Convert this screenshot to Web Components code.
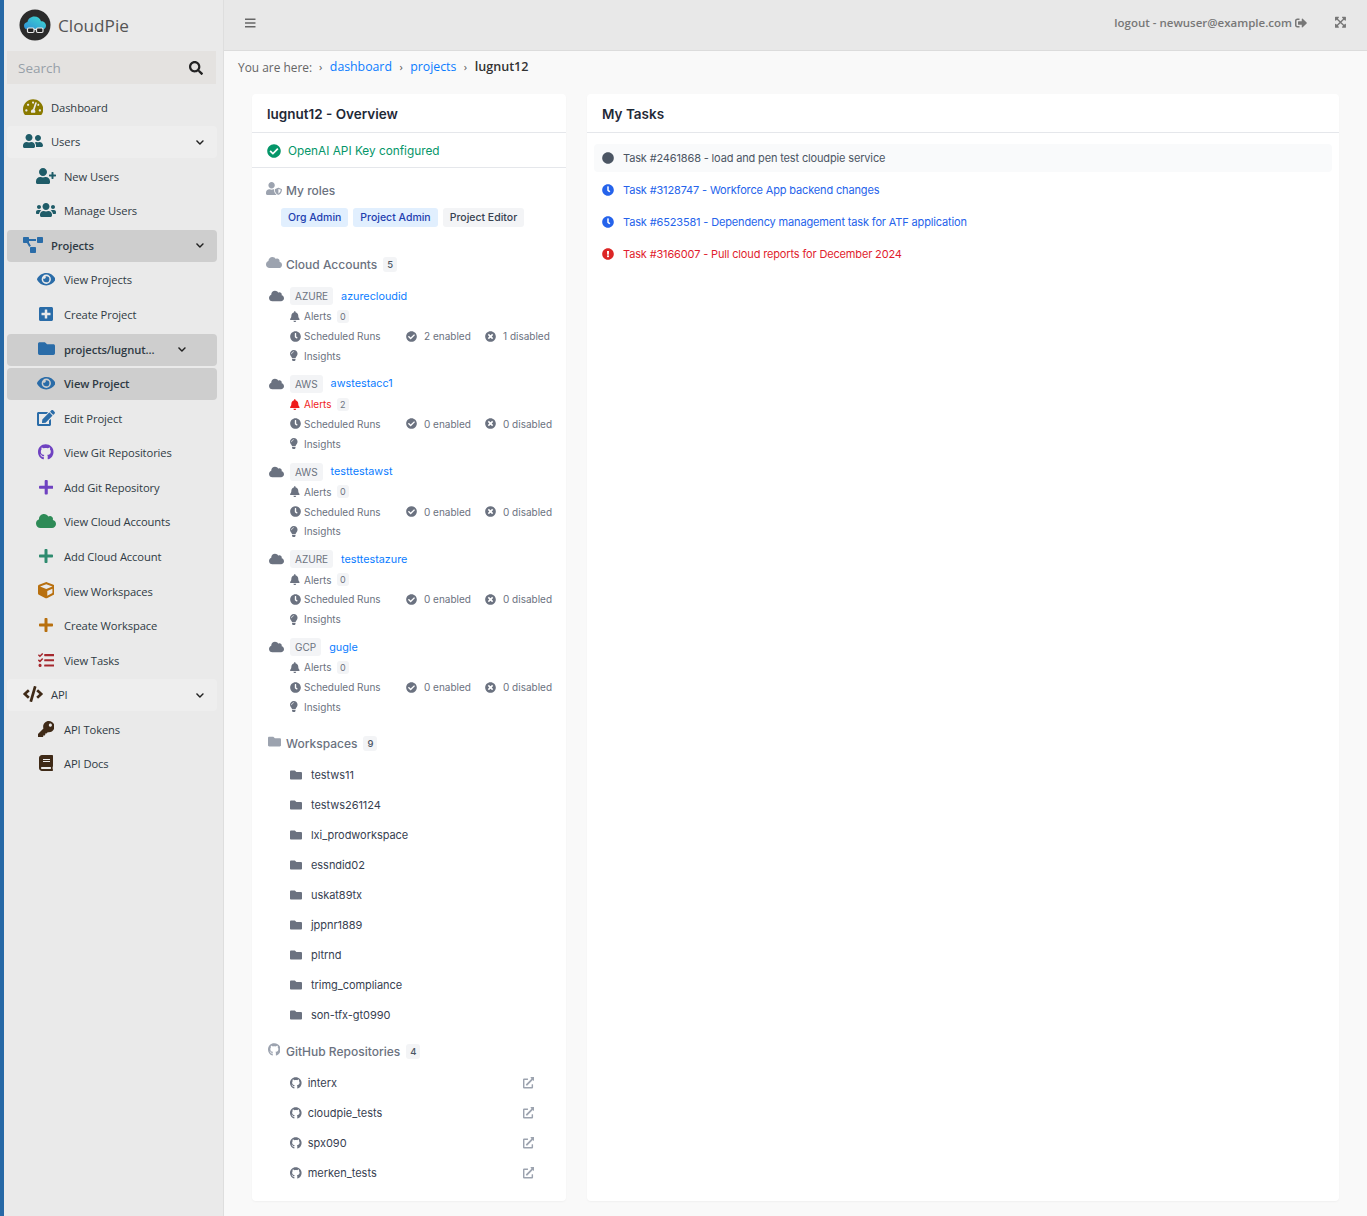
<!DOCTYPE html>
<html lang="en"><head><meta charset="utf-8"><title>CloudPie</title>
<style>html,body{margin:0;padding:0;background:#f9f9f9}body{font-family:"Open Sans",sans-serif}</style>
</head><body>
<app-shell></app-shell>
<script>
const I={
search:[512,"M505 442.7L405.3 343c-4.5-4.5-10.6-7-17-7H372c27.6-35.3 44-79.7 44-128C416 93.1 322.9 0 208 0S0 93.1 0 208s93.1 208 208 208c48.3 0 92.7-16.4 128-44v16.3c0 6.4 2.5 12.5 7 17l99.7 99.7c9.4 9.4 24.6 9.4 33.9 0l28.3-28.3c9.4-9.4 9.4-24.6.1-34zM208 336c-70.7 0-128-57.2-128-128 0-70.7 57.2-128 128-128 70.7 0 128 57.2 128 128 0 70.7-57.2 128-128 128z"],
check:[512,"M504 256c0 136.967-111.033 248-248 248S8 392.967 8 256 119.033 8 256 8s248 111.033 248 248zM227.314 387.314l184-184c6.248-6.248 6.248-16.379 0-22.627l-22.627-22.627c-6.248-6.249-16.379-6.249-22.628 0L216 308.118l-70.059-70.059c-6.248-6.248-16.379-6.248-22.628 0l-22.627 22.627c-6.248 6.248-6.248 16.379 0 22.627l104 104c6.249 6.249 16.379 6.249 22.628.001z"],
times:[512,"M256 8C119 8 8 119 8 256s111 248 248 248 248-111 248-248S393 8 256 8zm121.6 313.1c4.7 4.7 4.7 12.3 0 17L338 377.6c-4.7 4.7-12.3 4.7-17 0L256 312l-65.1 65.6c-4.7 4.7-12.3 4.7-17 0L134.4 338c-4.7-4.7-4.7-12.3 0-17l65.6-65-65.6-65.1c-4.7-4.7-4.7-12.3 0-17l39.6-39.6c4.7-4.7 12.3-4.7 17 0l65 65.7 65.1-65.6c4.7-4.7 12.3-4.7 17 0l39.6 39.6c4.7 4.7 4.7 12.3 0 17L312 256l65.6 65.1z"],
clock:[512,"M256,8C119,8,8,119,8,256S119,504,256,504,504,393,504,256,393,8,256,8Zm92.49,313h0l-20,25a16,16,0,0,1-22.49,2.5h0l-67-49.72a40,40,0,0,1-15-31.23V112a16,16,0,0,1,16-16h32a16,16,0,0,1,16,16V256l58,42.5A16,16,0,0,1,348.49,321Z"],
dot:[512,"M256 8C119 8 8 119 8 256s111 248 248 248 248-111 248-248S393 8 256 8z"],
exc:[512,"M504 256c0 136.997-111.043 248-248 248S8 392.997 8 256C8 119.083 119.043 8 256 8s248 111.083 248 248zm-248 50c-25.405 0-46 20.595-46 46s20.595 46 46 46 46-20.595 46-46-20.595-46-46-46zm-43.673-165.346l7.418 136c.347 6.364 5.609 11.346 11.982 11.346h48.546c6.373 0 11.635-4.982 11.982-11.346l7.418-136c.375-6.874-5.098-12.654-11.982-12.654h-63.383c-6.884 0-12.356 5.78-11.981 12.654z"],
bell:[448,"M224 512c35.32 0 63.97-28.65 63.97-64H160.03c0 35.35 28.65 64 63.97 64zm215.39-149.71c-19.32-20.76-55.47-51.99-55.47-154.29 0-77.7-54.48-139.9-127.94-155.16V32c0-17.67-14.32-32-31.98-32s-31.98 14.33-31.98 32v20.84C118.56 68.1 64.08 130.3 64.08 208c0 102.3-36.15 133.53-55.47 154.29-6 6.45-8.66 14.16-8.61 21.71.11 16.4 12.98 32 32.1 32h383.8c19.12 0 32-15.6 32.1-32 .05-7.55-2.61-15.27-8.61-21.71z"],
cloud:[640,"M537.6 226.6c4.1-10.7 6.4-22.4 6.4-34.6 0-53-43-96-96-96-19.7 0-38.1 6-53.3 16.2C367 64.2 315.3 32 256 32c-88.4 0-160 71.6-160 160 0 2.7.1 5.4.2 8.1C40.2 219.8 0 273.2 0 336c0 79.5 64.5 144 144 144h368c70.7 0 128-57.3 128-128 0-61.9-44-113.6-102.4-125.4z"],
folder:[512,"M464 128H272l-64-64H48C21.49 64 0 85.49 0 112v288c0 26.51 21.49 48 48 48h416c26.51 0 48-21.49 48-48V176c0-26.51-21.49-48-48-48z"],
plus:[448,"M416 208H272V64c0-17.67-14.33-32-32-32h-32c-17.67 0-32 14.33-32 32v144H32c-17.67 0-32 14.33-32 32v32c0 17.67 14.33 32 32 32h144v144c0 17.67 14.33 32 32 32h32c17.67 0 32-14.33 32-32V304h144c17.67 0 32-14.33 32-32v-32c0-17.67-14.33-32-32-32z"],
plussq:[448,"M400 32H48C21.5 32 0 53.5 0 80v352c0 26.5 21.5 48 48 48h352c26.5 0 48-21.5 48-48V80c0-26.5-21.5-48-48-48zm-32 252c0 6.6-5.4 12-12 12h-92v92c0 6.6-5.4 12-12 12h-56c-6.6 0-12-5.4-12-12v-92H92c-6.6 0-12-5.4-12-12v-56c0-6.6 5.4-12 12-12h92v-92c0-6.6 5.4-12 12-12h56c6.6 0 12 5.4 12 12v92h92c6.6 0 12 5.4 12 12v56z"],
eye:[576,"M572.52 241.4C518.29 135.59 410.93 64 288 64S57.68 135.64 3.48 241.41a32.35 32.35 0 0 0 0 29.19C57.71 376.41 165.07 448 288 448s230.32-71.64 284.52-177.41a32.35 32.35 0 0 0 0-29.19zM288 400a144 144 0 1 1 144-144 143.93 143.93 0 0 1-144 144zm0-240a95.31 95.31 0 0 0-25.31 3.79 47.85 47.85 0 0 1-66.9 66.9A95.78 95.78 0 1 0 288 160z"],
users:[640,"M96 224c35.3 0 64-28.7 64-64s-28.7-64-64-64-64 28.7-64 64 28.7 64 64 64zm448 0c35.3 0 64-28.7 64-64s-28.7-64-64-64-64 28.7-64 64 28.7 64 64 64zm32 32h-64c-17.6 0-33.5 7.1-45.1 18.6 40.3 22.1 68.9 62 75.1 109.4h66c17.7 0 32-14.3 32-32v-32c0-35.3-28.7-64-64-64zm-256 0c61.9 0 112-50.1 112-112S381.9 32 320 32 208 82.1 208 144s50.1 112 112 112zm76.8 32h-8.3c-20.8 10-43.9 16-68.5 16s-47.6-6-68.5-16h-8.3C179.6 288 128 339.6 128 403.2V432c0 26.5 21.5 48 48 48h288c26.5 0 48-21.5 48-48v-28.8c0-63.6-51.6-115.2-115.2-115.2zm-223.7-13.4C161.5 263.1 145.6 256 128 256H64c-35.3 0-64 28.7-64 64v32c0 17.7 14.3 32 32 32h65.9c6.3-47.4 34.9-87.3 75.2-109.4z"],
friends:[640,"M192 256c61.9 0 112-50.1 112-112S253.9 32 192 32 80 82.1 80 144s50.1 112 112 112zm76.8 32h-8.3c-20.8 10-43.9 16-68.5 16s-47.6-6-68.5-16h-8.3C51.6 288 0 339.6 0 403.2V432c0 26.5 21.5 48 48 48h288c26.5 0 48-21.5 48-48v-28.8c0-63.6-51.6-115.2-115.2-115.2zM480 256c53 0 96-43 96-96s-43-96-96-96-96 43-96 96 43 96 96 96zm48 32h-3.8c-13.9 4.8-28.6 8-44.2 8s-30.3-3.2-44.2-8H432c-20.4 0-39.2 5.9-55.7 15.4 24.4 26.3 39.7 61.2 39.7 99.8v38.4c0 2.2-.5 4.3-.6 6.4H592c26.5 0 48-21.5 48-48 0-61.9-50.1-112-112-112z"],
userplus:[640,"M624 208h-64v-64c0-8.8-7.2-16-16-16h-32c-8.8 0-16 7.2-16 16v64h-64c-8.8 0-16 7.2-16 16v32c0 8.8 7.2 16 16 16h64v64c0 8.8 7.2 16 16 16h32c8.8 0 16-7.2 16-16v-64h64c8.8 0 16-7.2 16-16v-32c0-8.8-7.2-16-16-16zm-400 48c70.7 0 128-57.3 128-128S294.7 0 224 0 96 57.3 96 128s57.3 128 128 128zm89.6 32h-16.7c-22.2 10.2-46.9 16-72.9 16s-50.6-5.8-72.9-16h-16.7C60.2 288 0 348.2 0 422.4V464c0 26.5 21.5 48 48 48h352c26.5 0 48-21.5 48-48v-41.6c0-74.2-60.2-134.4-134.4-134.4z"],
edit:[576,"M402.6 83.2l90.2 90.2c3.8 3.8 3.8 10 0 13.8L274.4 405.6l-92.8 10.3c-12.4 1.4-22.9-9.1-21.5-21.5l10.3-92.8L388.8 83.2c3.8-3.8 10-3.8 13.8 0zm162-22.9l-48.8-48.8c-15.2-15.2-39.9-15.2-55.2 0l-35.4 35.4c-3.8 3.8-3.8 10 0 13.8l90.2 90.2c3.8 3.8 10 3.8 13.8 0l35.4-35.4c15.2-15.3 15.2-40 0-55.2zM384 346.2V448H64V128h229.8c3.2 0 6.2-1.3 8.5-3.5l40-40c7.6-7.6 2.2-20.5-8.5-20.5H48C21.5 64 0 85.5 0 112v352c0 26.5 21.5 48 48 48h352c26.5 0 48-21.5 48-48V306.2c0-10.7-12.9-16-20.5-8.5l-40 40c-2.2 2.3-3.5 5.3-3.5 8.5z"],
github:[496,"M165.9 397.4c0 2-2.3 3.6-5.2 3.6-3.3 0-5.6-1.6-5.6-3.6 0-2 2.3-3.6 5.2-3.6 3-.3 5.6 1.3 5.6 3.6zm-31.1-4.5c-.7 2 1.3 4.3 4.3 4.9 2.6 1 5.6 0 6.2-2s-1.3-4.3-4.3-5.2c-2.6-.7-5.5.3-6.2 2.3zm44.2-1.7c-2.9.7-4.9 2.6-4.6 4.9.3 2 2.9 3.3 5.9 2.6 2.9-.7 4.9-2.6 4.6-4.6-.3-1.9-3-3.2-5.9-2.9zM244.8 8C106.1 8 0 113.3 0 252c0 110.9 69.8 205.8 169.5 239.2 12.8 2.3 17.3-5.6 17.3-12.1 0-6.2-.3-40.4-.3-61.4 0 0-70 15-84.7-29.8 0 0-11.4-29.1-27.8-36.6 0 0-22.9-15.7 1.6-15.4 0 0 24.9 2 38.6 25.8 21.9 38.6 58.6 27.5 72.9 20.9 2.3-16 8.8-27.1 16-33.7-55.9-6.2-112.3-14.3-112.3-110.5 0-27.5 7.6-41.3 23.6-58.9-2.6-6.5-11.1-33.3 2.6-67.9 20.9-6.5 69 27 69 27 20-5.6 41.5-8.5 62.8-8.5s42.8 2.9 62.8 8.5c0 0 48.1-33.6 69-27 13.7 34.7 5.2 61.4 2.6 67.9 16 17.7 25.8 31.5 25.8 58.9 0 96.5-58.9 104.2-114.8 110.5 9.2 7.9 17 22.9 17 46.4 0 33.7-.3 75.4-.3 83.6 0 6.5 4.6 14.4 17.3 12.1C428.2 457.8 496 362.9 496 252 496 113.3 383.5 8 244.8 8z"],
ext:[512,"M432,320H400a16,16,0,0,0-16,16V448H64V128H208a16,16,0,0,0,16-16V80a16,16,0,0,0-16-16H48A48,48,0,0,0,0,112V464a48,48,0,0,0,48,48H400a48,48,0,0,0,48-48V336A16,16,0,0,0,432,320ZM488,0h-128c-21.37,0-32.05,25.91-17,41l35.73,35.73L135,320.37a24,24,0,0,0,0,34L157.67,377a24,24,0,0,0,34,0L435.28,133.32,471,169c15,15,41,4.5,41-17V24A24,24,0,0,0,488,0Z"],
cube:[512,"M239.1 6.3l-208 78c-18.7 7-31.1 25-31.1 45v225.1c0 18.2 10.3 34.8 26.5 42.9l208 104c13.5 6.8 29.4 6.8 42.9 0l208-104c16.3-8.1 26.5-24.8 26.5-42.9V129.3c0-20-12.4-37.9-31.1-44.9l-208-78C262 2.2 250 2.2 239.1 6.3zM256 68.4l192 72v1.1l-192 78-192-78v-1.1l192-72zm32 356V275.5l160-65v133.9l-160 80z"],
tasks:[512,"M139.61 35.5a12 12 0 0 0-17 0L58.93 98.81l-22.7-22.12a12 12 0 0 0-17 0L3.53 92.41a12 12 0 0 0 0 17l47.59 47.4a12.78 12.78 0 0 0 17.61 0l15.59-15.62L156.52 69a12.09 12.09 0 0 0 .09-17zm0 159.19a12 12 0 0 0-17 0l-63.68 63.72-22.7-22.1a12 12 0 0 0-17 0L3.53 252a12 12 0 0 0 0 17L51 316.5a12.77 12.77 0 0 0 17.6 0l15.7-15.69 72.2-72.22a12 12 0 0 0 .09-16.9zM64 368c-26.49 0-48.59 21.5-48.59 48S37.53 464 64 464a48 48 0 0 0 0-96zm432 16H208a16 16 0 0 0-16 16v32a16 16 0 0 0 16 16h288a16 16 0 0 0 16-16v-32a16 16 0 0 0-16-16zm0-320H208a16 16 0 0 0-16 16v32a16 16 0 0 0 16 16h288a16 16 0 0 0 16-16V80a16 16 0 0 0-16-16zm0 160H208a16 16 0 0 0-16 16v32a16 16 0 0 0 16 16h288a16 16 0 0 0 16-16v-32a16 16 0 0 0-16-16z"],
code:[640,"M278.9 511.5l-61-17.7c-6.4-1.8-10-8.5-8.2-14.9L346.2 8.7c1.8-6.4 8.5-10 14.9-8.2l61 17.7c6.4 1.8 10 8.5 8.2 14.9L293.8 503.3c-1.9 6.4-8.5 10.1-14.9 8.2zm-114-112.2l43.5-46.4c4.6-4.9 4.3-12.7-.8-17.2L117 256l90.6-79.7c5.1-4.5 5.5-12.3.8-17.2l-43.5-46.4c-4.5-4.8-12.1-5.1-17-.5L3.8 247.2c-5.1 4.7-5.1 12.8 0 17.5l144.1 135.1c4.9 4.6 12.5 4.4 17-.5zm327.2.6l144.1-135.1c5.1-4.7 5.1-12.8 0-17.5L492.1 112.1c-4.8-4.5-12.4-4.3-17 .5L431.6 159c-4.6 4.9-4.3 12.7.8 17.2L523 256l-90.6 79.7c-5.1 4.5-5.5 12.3-.8 17.2l43.5 46.4c4.5 4.9 12.1 5.1 17 .6z"],
key:[512,"M512 176.001C512 273.203 433.202 352 336 352c-11.22 0-22.19-1.062-32.827-3.069l-24.012 27.014A23.999 23.999 0 0 1 261.223 384H224v40c0 13.255-10.745 24-24 24h-40v40c0 13.255-10.745 24-24 24H24c-13.255 0-24-10.745-24-24v-78.059c0-6.365 2.529-12.47 7.029-16.971l161.802-161.802C163.108 213.814 160 195.271 160 176 160 78.798 238.797.001 335.999 0 433.488-.001 512 78.511 512 176.001zM336 128c0 26.51 21.49 48 48 48s48-21.49 48-48-21.49-48-48-48-48 21.49-48 48z"],
book:[448,"M448 360V24c0-13.3-10.7-24-24-24H96C43 0 0 43 0 96v320c0 53 43 96 96 96h328c13.3 0 24-10.7 24-24v-16c0-7.5-3.5-14.3-8.9-18.7-4.2-15.4-4.2-59.3 0-74.7 5.4-4.3 8.9-11.1 8.9-18.6zM128 134c0-3.3 2.7-6 6-6h212c3.3 0 6 2.7 6 6v20c0 3.3-2.7 6-6 6H134c-3.3 0-6-2.7-6-6v-20zm0 64c0-3.3 2.7-6 6-6h212c3.3 0 6 2.7 6 6v20c0 3.3-2.7 6-6 6H134c-3.3 0-6-2.7-6-6v-20zm253.4 250H96c-17.7 0-32-14.3-32-32 0-17.6 14.4-32 32-32h285.4c-1.9 17.1-1.9 46.9 0 64z"],
bulb:[352,"M96.06 454.35c.01 6.29 1.87 12.45 5.36 17.69l17.09 25.69a31.99 31.99 0 0 0 26.64 14.28h61.71a31.99 31.99 0 0 0 26.64-14.28l17.09-25.69a31.989 31.989 0 0 0 5.36-17.69l.04-38.35H96.01l.05 38.35zM0 176c0 44.37 16.45 84.85 43.56 115.78 16.52 18.85 42.36 58.23 52.21 91.45.04.26.07.52.11.78h160.24c.04-.26.07-.51.11-.78 9.85-33.22 35.69-72.6 52.21-91.45C335.55 260.85 352 220.37 352 176 352 78.61 272.91-.3 175.45 0 73.44.31 0 82.97 0 176zm176-80c-44.11 0-80 35.89-80 80 0 8.84-7.16 16-16 16s-16-7.16-16-16c0-61.76 50.24-112 112-112 8.84 0 16 7.16 16 16s-7.16 16-16 16z"],
gauge:[576,"M288 32C128.94 32 0 160.94 0 320c0 52.8 14.25 102.26 39.06 144.8 5.61 9.62 16.3 15.2 27.44 15.2h443c11.14 0 21.83-5.58 27.44-15.2C561.75 422.26 576 372.8 576 320c0-159.06-128.94-288-288-288zm0 64c14.71 0 26.58 10.13 30.32 23.65-1.11 2.26-2.64 4.23-3.45 6.67l-9.22 27.67c-5.13 3.49-10.97 6.01-17.64 6.01-17.67 0-32-14.33-32-32S270.33 96 288 96zM96 384c-17.67 0-32-14.33-32-32s14.33-32 32-32 32 14.33 32 32-14.33 32-32 32zm48-160c-17.67 0-32-14.33-32-32s14.33-32 32-32 32 14.33 32 32-14.33 32-32 32zm246.77-72.41l-61.33 184C343.13 347.33 352 364.54 352 384c0 11.72-3.38 22.55-8.88 32H232.88c-5.5-9.45-8.88-20.28-8.88-32 0-33.94 26.5-61.43 59.9-63.59l61.34-184.01c4.17-12.56 17.73-19.45 30.36-15.17 12.57 4.19 19.35 17.79 15.17 30.36zm14.66 57.2l15.52-46.55c3.47-1.29 7.13-2.23 11.05-2.23 17.67 0 32 14.33 32 32s-14.33 32-32 32c-11.38-.01-20.89-6.28-26.57-15.22zM480 384c-17.67 0-32-14.33-32-32s14.33-32 32-32 32 14.33 32 32-14.33 32-32 32z"],
diagram:[640,"M384 320H256c-17.67 0-32 14.33-32 32v128c0 17.67 14.33 32 32 32h128c17.67 0 32-14.33 32-32V352c0-17.67-14.33-32-32-32zM192 32c0-17.67-14.33-32-32-32H32C14.33 0 0 14.33 0 32v128c0 17.67 14.33 32 32 32h95.72l73.16 128.04C211.98 300.98 232.4 288 256 288h.28L192 175.51V128h224V64H192V32zM608 0H480c-17.67 0-32 14.33-32 32v128c0 17.67 14.33 32 32 32h128c17.67 0 32-14.33 32-32V32c0-17.67-14.33-32-32-32z"],
signout:[512,"M497 273L329 441c-15 15-41 4.5-41-17v-96H152c-13.3 0-24-10.7-24-24v-96c0-13.3 10.7-24 24-24h136V88c0-21.4 25.9-32 41-17l168 168c9.3 9.4 9.3 24.6 0 34zM192 436v-40c0-6.6-5.4-12-12-12H96c-17.7 0-32-14.3-32-32V160c0-17.7 14.3-32 32-32h84c6.6 0 12-5.4 12-12V76c0-6.6-5.4-12-12-12H96c-53 0-96 43-96 96v192c0 53 43 96 96 96h84c6.6 0 12-5.4 12-12z"],
expand:[448,"M448.1 344v112c0 13.3-10.7 24-24 24h-112c-21.4 0-32.1-25.9-17-41l36.2-36.2L224 295.6 116.8 402.9 153 439c15.1 15.1 4.4 41-17 41H24c-13.3 0-24-10.7-24-24V344c0-21.4 25.9-32.1 41-17l36.2 36.2L184.5 256 77.2 148.7 41 185c-15.1 15.1-41 4.4-41-17V56c0-13.3 10.7-24 24-24h112c21.4 0 32.1 25.9 17 41l-36.2 36.2L224 216.4l107.3-107.3L295.1 73c-15.1-15.1-4.4-41 17-41h112c13.3 0 24 10.7 24 24v112c0 21.4-25.9 32.1-41 17l-36.2-36.2L263.6 256l107.3 107.3 36.2-36.2c15.1-15.2 41-4.5 41 16.9z"],
shield:[640,"M622.3 271.1l-115.2-45c-4.1-1.6-12.6-3.7-22.2 0l-115.2 45c-10.7 4.2-17.7 14-17.7 24.9 0 111.6 68.7 188.8 132.9 213.9 9.6 3.7 18 1.6 22.2 0C558.4 489.9 640 420.5 640 296c0-10.9-7-20.7-17.7-24.9zM496 462.4V273.3l95.5 37.3c-5.6 87.1-60.9 135.4-95.5 151.8zM224 256c70.7 0 128-57.3 128-128S294.7 0 224 0 96 57.3 96 128s57.3 128 128 128zm96 40c0-2.5.8-4.7 1.1-7.2-2.5-.1-4.9-.8-7.5-.8h-16.7c-22.2 10.2-46.9 16-72.9 16s-50.6-5.8-72.9-16h-16.7C60.2 288 0 348.2 0 422.4V464c0 26.5 21.5 48 48 48h352c6.8 0 13.3-1.5 19.2-4-54-42.9-99.2-116.7-99.2-212z"],
chevron:[448,"M207 381.5L12.7 187.1c-9.4-9.4-9.4-24.6 0-33.9l22.7-22.7c9.4-9.4 24.5-9.4 33.9 0L224 284.5l154.7-154c9.4-9.3 24.5-9.3 33.9 0l22.7 22.7c9.4 9.4 9.4 24.6 0 33.9L241 381.5c-9.4 9.4-24.6 9.4-34 0z"],
bars:[448,"M16 132h416c8.8 0 16-7.2 16-16V76c0-8.8-7.2-16-16-16H16C7.2 60 0 67.2 0 76v40c0 8.800 7.2 16 16 16zm0 160h416c8.800 0 16-7.2 16-16v-40c0-8.800-7.200-16-16-16H16c-8.800 0-16 7.200-16 16v40c0 8.800 7.200 16 16 16zm0 160h416c8.800 0 16-7.200 16-16v-40c0-8.800-7.200-16-16-16H16c-8.800 0-16 7.200-16 16v40c0 8.800 7.200 16 16 16z"]
};
const def=(n,c)=>customElements.define(n,c);
class Base extends HTMLElement{
  constructor(){super();this.attachShadow({mode:"open"});}
  connectedCallback(){this.shadowRoot.innerHTML=this.html();}
}
def("fa-icon",class extends Base{
  html(){const [w,d]=I[this.getAttribute("n")];
    const s=+this.getAttribute("s")||14;const c=this.getAttribute("c")||"currentColor";
    const wd=s*w/512;
    return `<style>:host{display:inline-flex;align-items:center;justify-content:center;flex:none;line-height:0}svg{display:block}</style><svg width="${wd}" height="${s}" viewBox="0 0 ${w} 512" fill="${c}" aria-hidden="true"><path d="${d}"/></svg>`;}
});
def("brand-logo",class extends Base{
  html(){return `<style>:host{display:flex;align-items:center;height:50px;padding-left:19px;gap:7px;color:#555;font:400 17.200px "Open Sans",sans-serif}svg{display:block;flex:none}</style>
  <svg width="32" height="32" viewBox="0 0 32 32"><defs><linearGradient id="g" x1="0" y1="1" x2="1" y2="0"><stop offset="0" stop-color="#2f8fd8"/><stop offset="1" stop-color="#3fdcd0"/></linearGradient></defs>
  <circle cx="16" cy="16" r="15.500" fill="#2b2b2b"/>
  <path d="M9 20.500c-2.500 0-4-1.800-4-3.800 0-2 1.500-3.500 3.500-3.700.500-3.200 3.500-5.500 6.800-5.500 3.300 0 5.800 1.900 6.700 4.700 2.900-.1 5 2 5 4.500 0 2.200-1.600 3.800-3.800 3.800z" fill="url(#g)"/>
  <rect x="8.500" y="19" width="6.500" height="4.500" rx="1.200" fill="#222" stroke="#e8e8e8" stroke-width="1.200"/>
  <rect x="17.500" y="19" width="6.500" height="4.500" rx="1.200" fill="#222" stroke="#e8e8e8" stroke-width="1.200"/>
  <path d="M15 20.500h2.500" stroke="#e8e8e8" stroke-width="1.200"/></svg><slot></slot>`;}
});
def("search-box",class extends Base{
  html(){return `<style>:host{display:flex;align-items:center;justify-content:space-between;box-sizing:border-box;height:33px;margin:1px 7px 0;padding:0 13px 0 11px;background:#e4e2e0;color:#97a0a8;font:400 13.500px "Open Sans",sans-serif}fa-icon{color:#222}</style><span>Search</span><fa-icon n="search" s="14"></fa-icon>`;}
});
def("nav-row",class extends Base{
  html(){const a=k=>this.getAttribute(k);
    const sub=this.hasAttribute("sub"),chev=this.hasAttribute("chev");
    const bg=a("bg")||"transparent";
    return `<style>:host{display:flex;align-items:center;box-sizing:border-box;height:32px;width:210px;padding-left:${sub?29:16}px;background:${bg};border-radius:4px;color:${a("tc")||"#2f3a44"};font:${a("fw")||400} 11.200px/32px "Open Sans",sans-serif;letter-spacing:-.1px}
    .i{width:20px;display:flex;justify-content:center;flex:none;margin-right:8px;position:relative;top:-1px}
    .t{flex:1;white-space:nowrap}
    .c{margin-right:${a("cr")||13}px;color:#222;display:flex}</style>
    <span class="i"><fa-icon n="${a("i")}" s="${a("s")||16}" c="${a("ic")}"></fa-icon></span><span class="t"><slot></slot></span>${chev?`<span class="c"><fa-icon n="chevron" s="9"></fa-icon></span>`:""}`;}
});
def("side-bar",class extends Base{
  html(){
    const G=(i,ic,t,extra="")=>`<nav-row i="${i}" ic="${ic}" ${extra}>${t}</nav-row>`;
    const teal="#1f5c68",blue="#2a6ca8",pur="#6f42c1",brn="#3f2a17",org="#b8700f";
    return `<style>:host{display:block;box-sizing:border-box;width:224px;min-height:1216px;background:#eaeaea;border-left:4px solid #2769a6;border-right:1px solid #dedede}
    .n{display:flex;flex-direction:column;gap:2.580px;margin:7.500px 0 0 3px}</style>
    <brand-logo style="margin-left:-4px">CloudPie</brand-logo>
    <search-box style="margin-left:3px"></search-box>
    <div class="n">
    ${G("gauge","#8a7a00","Dashboard",'s="18"')}
    ${G("friends",teal,"Users",'chev bg="#eeeeee"')}
    ${G("userplus",teal,"New Users","sub")}
    ${G("users",teal,"Manage Users","sub")}
    ${G("diagram",blue,"Projects",'chev bg="#cecece" fw="600"')}
    ${G("eye",blue,"View Projects",'sub s="16.500"')}
    ${G("plussq",blue,"Create Project","sub")}
    ${G("folder",blue,"projects/lugnut...",'sub chev bg="#cecece" fw="600" cr="31" s="17"')}
    ${G("eye",blue,"View Project",'sub bg="#cecece" fw="600" s="16.500"')}
    ${G("edit",blue,"Edit Project","sub")}
    ${G("github",pur,"View Git Repositories",'sub s="16"')}
    ${G("plus",pur,"Add Git Repository",'sub s="16.500"')}
    ${G("cloud","#2e8b57","View Cloud Accounts",'sub s="16"')}
    ${G("plus","#2e8b6f","Add Cloud Account",'sub s="16"')}
    ${G("cube",org,"View Workspaces",'sub s="16.500"')}
    ${G("plus",org,"Create Workspace",'sub s="16"')}
    ${G("tasks","#a5282e","View Tasks",'sub s="16.500"')}
    ${G("code",brn,"API",'chev bg="#eeeeee"')}
    ${G("key",brn,"API Tokens",'sub s="16.500"')}
    ${G("book",brn,"API Docs","sub")}
    </div>`;}
});
def("top-bar",class extends Base{
  html(){return `<style>:host{display:flex;align-items:center;box-sizing:border-box;height:51px;background:#e8e8e8;border-bottom:1px solid #dcdcdc;padding:0 21px 5px 21px;color:#777;font:600 11.500px "Open Sans",sans-serif}
  .l{flex:1;color:#666;display:flex}.r{display:flex;align-items:center;gap:3px;margin-right:28px}</style>
  <span class="l"><fa-icon n="bars" s="12"></fa-icon></span><span class="r">logout - newuser@example.com <fa-icon n="signout" s="12"></fa-icon></span><fa-icon n="expand" s="12.500"></fa-icon>`;}
});
def("bread-crumb",class extends Base{
  html(){const L=t=>`<a>${t}</a><i>›</i>`;
  return `<style>:host{display:flex;align-items:center;height:31px;padding-bottom:1px;padding-left:14px;color:#666;font:400 12.300px "Open Sans",sans-serif;white-space:nowrap}
  a{color:#0a7cff}i{font-style:normal;color:#555;margin:0 7.500px;font-size:11px}b{color:#333;font-weight:600;font-size:12.600px}span{margin-right:7px;font-size:11.900px}</style>
  <span>You are here:</span><i style="margin-left:0">›</i>${L("dashboard")}${L("projects")}<b>lugnut12</b>`;}
});
def("card-box",class extends Base{
  html(){return `<style>:host{display:block;box-sizing:border-box;background:#fff;border-radius:4px;box-shadow:0 1px 2px rgba(0,0,0,.04);font-family:Inter,sans-serif;min-width:0}
  .h{height:39px;box-sizing:border-box;border-bottom:1px solid #e5e7eb;padding:1px 15px 0;display:flex;align-items:center;font:600 13.500px Inter,sans-serif;color:#1f2937}</style>
  <div class="h">${this.getAttribute("title-text")}</div><slot></slot>`;}
});
def("sec-title",class extends Base{
  html(){const c=this.getAttribute("count");
  return `<style>:host{display:flex;align-items:center;height:20px;color:#6b7280;font:500 12px Inter,sans-serif;padding-left:14px}
  fa-icon{margin-right:4px;position:relative;top:-2px;width:16px}
  b{font:500 9.500px Inter,sans-serif;background:#f3f4f6;color:#4b5563;padding:2px 4px;border-radius:3px;margin-left:6px}</style>
  <fa-icon n="${this.getAttribute("i")}" s="${this.getAttribute("s")||13}" c="#9ca3af"></fa-icon><slot></slot>${c?`<b>${c}</b>`:""}`;}
});
def("role-chips",class extends Base{
  html(){return `<style>:host{display:flex;gap:5px;margin:8px 0 0 29px;font:500 10.500px/19px Inter,sans-serif}
  span{padding:0 7px;border-radius:3px;height:19px;white-space:nowrap}.b{background:#e1effe;color:#1e40af}.g{background:#f3f4f6;color:#374151}</style>
  <span class="b">Org Admin</span><span class="b">Project Admin</span><span class="g">Project Editor</span>`;}
});
def("cloud-account",class extends Base{
  html(){const a=k=>this.getAttribute(k);const al=+a("alerts")>0;
  const I1=(n,c)=>`<span class="ic"><fa-icon n="${n}" s="11" c="${c||"#6b7280"}"></fa-icon></span>`;
  return `<style>:host{display:block;font:400 10px Inter,sans-serif;color:#6b7280;height:87.750px;padding-left:17px}
  .h{display:flex;align-items:center;height:18px;margin-bottom:1.600px}
  .cl{width:21px;display:flex}
  .p{background:#f3f4f6;border-radius:3px;padding:0 5px;line-height:18px;margin-right:8px;color:#6b7280}
  a{color:#0a7cff;font-size:10.800px}
  .r{display:flex;align-items:center;height:19.750px;padding-left:21px;white-space:nowrap}
  .ic{width:14px;display:flex;flex:none}
  .cnt{background:#f3f4f6;border-radius:3px;padding:1px 3.500px;margin-left:5px;font-size:9px;color:#6b7280}
  .s{width:102px;flex:none}.e{display:flex;align-items:center}.e1{width:79px}.e .ic{width:18px}</style>
  <div class="h"><span class="cl"><fa-icon n="cloud" s="12" c="#6b7280"></fa-icon></span><span class="p">${a("p")}</span><a>${a("name")}</a></div>
  <div class="r" style="${al?"color:#ef1c1c":""}">${I1("bell",al?"#ef1c1c":"")}Alerts<span class="cnt">${a("alerts")}</span></div>
  <div class="r">${I1("clock")}<span class="s">Scheduled Runs</span><span class="e e1">${I1("check")}${a("en")} enabled</span><span class="e">${I1("times")}${a("dis")} disabled</span></div>
  <div class="r">${I1("bulb")}Insights</div>`;}
});
def("work-item",class extends Base{
  html(){return `<style>:host{display:flex;align-items:center;height:30px;padding-left:38px;font:400 11px Inter,sans-serif;letter-spacing:-.05px;color:#374151}fa-icon{margin-right:9px}</style><fa-icon n="folder" s="12" c="#6b7280"></fa-icon><slot></slot>`;}
});
def("repo-item",class extends Base{
  html(){return `<style>:host{display:flex;align-items:center;height:30px;padding:0 32px 0 38px;font:400 11px Inter,sans-serif;color:#374151}.g{margin-right:6px}.t{flex:1}</style><fa-icon class="g" n="github" s="12" c="#6b7280"></fa-icon><span class="t"><slot></slot></span><fa-icon n="ext" s="11.500" c="#9ca3af"></fa-icon>`;}
});
def("overview-card",class extends Base{
  html(){
    const acc=[["AZURE","azurecloudid",0,2,1],["AWS","awstestacc1",2,0,0],["AWS","testtestawst",0,0,0],["AZURE","testtestazure",0,0,0],["GCP","gugle",0,0,0]];
    const ws=["testws11","testws261124","lxi_prodworkspace","essndid02","uskat89tx","jppnr1889","pltrnd","trimg_compliance","son-tfx-gt0990"];
    const rp=["interx","cloudpie_tests","spx090","merken_tests"];
    return `<style>:host{display:block}
    .k{display:flex;align-items:center;height:35px;box-sizing:border-box;border-bottom:1px solid #e5e7eb;padding:1px 0 0 15px;color:#059669;font:400 11.800px Inter,sans-serif;gap:7px}</style>
    <card-box title-text="lugnut12 - Overview" style="height:100%">
      <div class="k"><fa-icon n="check" s="14" c="#059669"></fa-icon>OpenAI API Key configured</div>
      <sec-title i="shield" style="margin-top:12px">My roles</sec-title>
      <role-chips></role-chips>
      <sec-title i="cloud" count="5" style="margin-top:27px">Cloud Accounts</sec-title>
      <div style="margin-top:13px">${acc.map(x=>`<cloud-account p="${x[0]}" name="${x[1]}" alerts="${x[2]}" en="${x[3]}" dis="${x[4]}"></cloud-account>`).join("")}</div>
      <sec-title i="folder" count="9" style="margin-top:8px">Workspaces</sec-title>
      <div style="margin-top:6px">${ws.map(t=>`<work-item>${t}</work-item>`).join("")}</div>
      <sec-title i="github" count="4" style="margin-top:12px">GitHub Repositories</sec-title>
      <div style="margin-top:6px">${rp.map(t=>`<repo-item>${t}</repo-item>`).join("")}</div>
    </card-box>`;}
});
def("task-row",class extends Base{
  html(){const c=this.getAttribute("c");
  return `<style>:host{display:flex;align-items:center;height:28px;margin:0 7px 4px;padding-left:8px;border-radius:4px;background:${this.getAttribute("bg")||"transparent"};color:${c};font:400 11px Inter,sans-serif;letter-spacing:-.15px;gap:9px}</style>
  <fa-icon n="${this.getAttribute("i")}" s="12" c="${this.getAttribute("ic")||c}"></fa-icon><slot></slot>`;}
});
def("tasks-card",class extends Base{
  html(){return `<style>:host{display:block}.l{padding-top:11px}</style>
  <card-box title-text="My Tasks" style="height:100%"><div class="l">
  <task-row i="dot" c="#4b5563" bg="#f9fafb">Task #2461868 - load and pen test cloudpie service</task-row>
  <task-row i="clock" c="#2563eb">Task #3128747 - Workforce App backend changes</task-row>
  <task-row i="clock" c="#2563eb">Task #6523581 - Dependency management task for ATF application</task-row>
  <task-row i="exc" c="#e11d2e" ic="#dc2626">Task #3166007 - Pull cloud reports for December 2024</task-row>
  </div></card-box>`;}
});
def("app-shell",class extends Base{
  html(){return `<style>:host{display:grid;grid-template-columns:224px 1fr;min-height:1216px;background:#f9f9f9}
  .g{display:grid;grid-template-columns:314px 752px;gap:21px;padding:11px 28px 15px 28px;height:1107px}</style>
  <side-bar></side-bar>
  <main><top-bar></top-bar><bread-crumb></bread-crumb><div class="g"><overview-card></overview-card><tasks-card></tasks-card></div></main>`;}
});
</script></body></html>
